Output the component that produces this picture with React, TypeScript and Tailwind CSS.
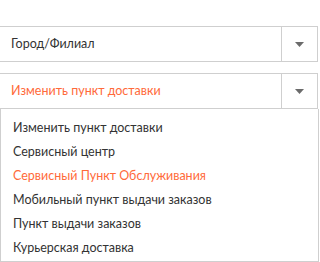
import React from 'react';

const options = [
  'Изменить пункт доставки',
  'Сервисный центр',
  'Сервисный Пункт Обслуживания',
  'Мобильный пункт выдачи заказов',
  'Пункт выдачи заказов',
  'Курьерская доставка',
];

const Caret: React.FC = () => (
  <svg width="9" height="5" viewBox="0 0 9 5">
    <path d="M0 0 H9 L4.5 5 Z" fill="#6b6b6b" />
  </svg>
);

interface SelectBoxProps {
  label: string;
  active?: boolean;
}

const SelectBox: React.FC<SelectBoxProps> = ({ label, active }) => (
  <div className="ml-[-2px] w-[320px] h-[36px] flex border border-[#cfcfcf] bg-white">
    <div
      className={`flex-1 flex items-center pl-[12px] text-[12.5px] ${
        active ? 'text-[#ff6a3a]' : 'text-[#333333]'
      }`}
    >
      {label}
    </div>
    <div className="w-[36px] flex items-center justify-center border-l border-[#cfcfcf]">
      <Caret />
    </div>
  </div>
);

export default function App() {
  const selected = 2;
  return (
    <div
      className="w-[320px] h-[262px] overflow-hidden bg-white pt-[26px]"
      style={{ fontFamily: '"Lato", "Open Sans", sans-serif' }}
    >
      <SelectBox label="Город/Филиал" />
      <div className="h-[11px]" />
      <SelectBox label="Изменить пункт доставки" active />
      <div className="w-[319px] border border-t-0 border-[#cfcfcf] bg-white pt-[7px] pb-[1px]">
        {options.map((opt, i) => (
          <div
            key={opt}
            className={`h-[24px] flex items-center pl-[12px] text-[12.5px] ${
              i === selected ? 'text-[#ff6a3a]' : 'text-[#333333]'
            }`}
          >
            {opt}
          </div>
        ))}
      </div>
    </div>
  );
}
